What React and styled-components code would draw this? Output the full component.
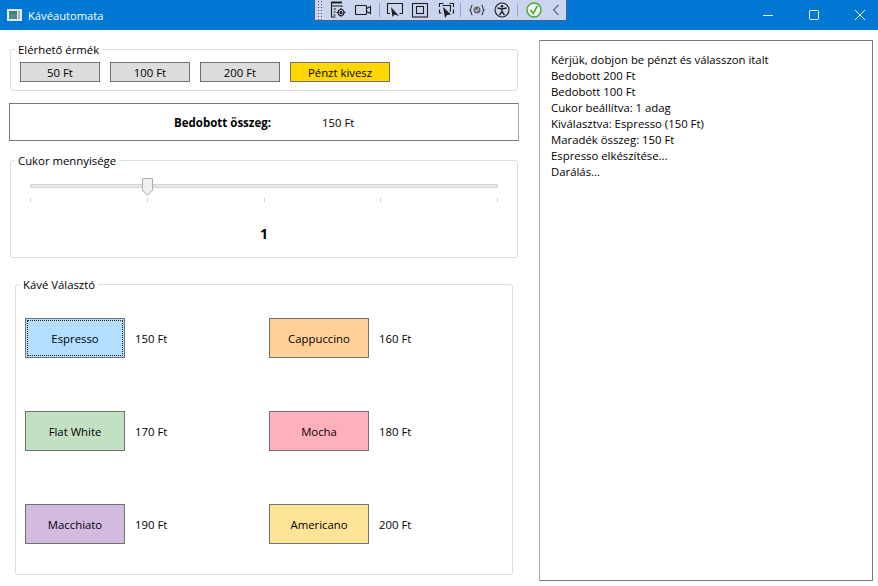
import React from "react";
import styled, { createGlobalStyle } from "styled-components";

const coins = ["50 Ft", "100 Ft", "200 Ft"];
const coffees = [
  { name: "Espresso", price: "150 Ft", color: "#b3deff", focused: true },
  { name: "Cappuccino", price: "160 Ft", color: "#ffd199" },
  { name: "Flat White", price: "170 Ft", color: "#c3e0c3" },
  { name: "Mocha", price: "180 Ft", color: "#ffb0bc" },
  { name: "Macchiato", price: "190 Ft", color: "#d3bbe0" },
  { name: "Americano", price: "200 Ft", color: "#ffe399" },
];
const logLines = [
  "Kérjük, dobjon be pénzt és válasszon italt",
  "Bedobott 200 Ft",
  "Bedobott 100 Ft",
  "Cukor beállítva: 1 adag",
  "Kiválasztva: Espresso (150 Ft)",
  "Maradék összeg: 150 Ft",
  "Espresso elkészítése...",
  "Darálás...",
];

const Icon = ({ children }) => (
  <DebugSlot>
    <svg width="22" height="20" viewBox="0 0 22 20" fill="none" stroke="#1e1e1e" strokeWidth="1.1">
      {children}
    </svg>
  </DebugSlot>
);

export default function App() {
  return (
    <>
      <GlobalStyle />
      <Window>
        <TitleBar>
          <AppIcon>
            <svg width="15" height="12" viewBox="0 0 15 12">
              <rect width="15" height="12" fill="#e4e9ec" />
              <rect x="2" y="2" width="8" height="8" fill="#4f8c8c" />
              <rect x="2" y="2" width="8" height="3" fill="#3f7f78" />
              <rect x="11" y="2" width="2" height="8" fill="#a9b4bc" />
            </svg>
          </AppIcon>
          <Title>Kávéautomata</Title>
          <WindowButtons>
            <WindowButton>
              <svg width="12" height="12" viewBox="0 0 12 12" stroke="#fff" fill="none">
                <path d="M1 6.500h10" />
              </svg>
            </WindowButton>
            <WindowButton>
              <svg width="12" height="12" viewBox="0 0 12 12" stroke="#fff" fill="none">
                <rect x="1.500" y="1.500" width="9" height="9" rx="1" />
              </svg>
            </WindowButton>
            <WindowButton>
              <svg width="12" height="12" viewBox="0 0 12 12" stroke="#fff" fill="none">
                <path d="M1 1l10 10M11 1L1 11" />
              </svg>
            </WindowButton>
          </WindowButtons>
          <DebugBar>
            <Grip />
            <Icon>
              <path d="M4 2.500h11" strokeWidth="2" />
              <path d="M4.500 3v14h4M4.500 6h10.500v1M6.500 9h2.500M6.500 12h2M6.500 15h2" />
              <circle cx="14" cy="12.500" r="3" />
              <circle cx="14" cy="12.500" r="1" fill="#1e1e1e" />
              <path d="M14 8v2M14 15v2M9.500 12.500h2M16.500 12.500h2" />
            </Icon>
            <Icon>
              <rect x="3.500" y="5.500" width="11" height="9" rx="0.500" />
              <path d="M14.500 8.500l4-2v7l-4-2z" />
            </Icon>
            <Sep />
            <Icon>
              <path d="M6 13.500H3.500v-10h15v10h-3" />
              <path d="M7 7l8 9-4.500-1.500L8.500 17z" fill="#1e1e1e" stroke="none" />
            </Icon>
            <Icon>
              <rect x="3.500" y="3.500" width="15" height="13.500" />
              <rect x="7.500" y="6.500" width="7" height="7" />
            </Icon>
            <Icon>
              <path d="M5.500 7V3.500h4M15.500 3.500h4V7M5.500 9.500V13h2M19.500 9.500V13h-1" />
              <path d="M8.500 5.500h8v5.500h-1" />
              <path d="M9 7l8 7.500-4 .5-2 3z" fill="#1e1e1e" stroke="none" />
            </Icon>
            <Sep />
            <Icon>
              <path d="M6.500 5C4.500 5 6 9.200 4 10c2 .8.5 5 2.500 5M15.500 5c2 0 .5 4.200 2.500 5-2 .8-.5 5-2.500 5" stroke="#333" />
              <circle cx="11" cy="10" r="3.500" fill="#666" stroke="none" />
              <path d="M9.300 10l1.300 1.300 2.200-2.600" stroke="#ccd5f0" />
            </Icon>
            <Icon>
              <circle cx="11" cy="10" r="7" />
              <circle cx="11" cy="6.300" r="1.300" fill="#1e1e1e" stroke="none" />
              <path d="M6.500 8l4.500 1 4.500-1M11 9v2.500l-2.500 3.500M11 11.500l2.500 3.500" strokeWidth="1.300" />
            </Icon>
            <Sep />
            <Icon>
              <circle cx="11" cy="10" r="7" fill="#f0f8ec" stroke="#45a63a" strokeWidth="1.400" />
              <path d="M7.500 10l2.800 3.500 4-7.500" stroke="#3b9c30" strokeWidth="1.500" />
            </Icon>
            <Chevron>
              <svg width="10" height="20" viewBox="0 0 10 20" fill="none">
                <path d="M7.500 5L2.500 10l5 5" stroke="#5a6690" strokeWidth="1.100" />
              </svg>
            </Chevron>
          </DebugBar>
        </TitleBar>
        <Content>
          <LeftColumn>
            <CoinGroup>
              <GroupTitle>Elérhető érmék</GroupTitle>
              <CoinRow>
                {coins.map(coin => (
                  <CoinButton key={coin}>{coin}</CoinButton>
                ))}
                <CoinButton $refund>Pénzt kivesz</CoinButton>
              </CoinRow>
            </CoinGroup>
            <AmountBox>
              <AmountLabel>Bedobott összeg:</AmountLabel>
              <span>150 Ft</span>
            </AmountBox>
            <SugarGroup>
              <GroupTitle>Cukor mennyisége</GroupTitle>
              <SugarBody>
                <Slider>
                  <Track />
                  <Thumb>
                    <svg width="12" height="19" viewBox="0 0 12 19">
                      <path d="M.5.5h10v11.500l-5 5.500-5-5.500z" fill="#f0f0f0" stroke="#acacac" />
                    </svg>
                  </Thumb>
                </Slider>
                <Ticks>
                  {[0, 1, 2, 3, 4].map(tick => (
                    <Tick key={tick} />
                  ))}
                </Ticks>
                <SugarValue>1</SugarValue>
              </SugarBody>
            </SugarGroup>
            <CoffeeGroup>
              <GroupTitle>Kávé Választó</GroupTitle>
              <CoffeeGrid>
                {coffees.map(coffee => (
                  <CoffeeItem key={coffee.name}>
                    <CoffeeButton $color={coffee.color} $focused={coffee.focused}>
                      {coffee.name}
                    </CoffeeButton>
                    <span>{coffee.price}</span>
                  </CoffeeItem>
                ))}
              </CoffeeGrid>
            </CoffeeGroup>
          </LeftColumn>
          <LogBox>
            {logLines.map(line => (
              <div key={line}>{line}</div>
            ))}
          </LogBox>
        </Content>
      </Window>
    </>
  );
}

const GlobalStyle = createGlobalStyle`
  html, body {
    margin: 0;
    padding: 0;
    background: #fff;
  }
  body {
    font-family: "Open Sans", "Noto Sans", sans-serif;
    font-size: 11.35px;
    color: #000;
  }
  * {
    box-sizing: border-box;
  }
`;

const Window = styled.div`
  width: 878px;
  height: 586px;
  overflow: hidden;
  display: flex;
  flex-direction: column;
`;

const TitleBar = styled.div`
  position: relative;
  height: 30px;
  flex: none;
  background: #0078d4;
  color: #fff;
  display: flex;
  align-items: center;
  padding-left: 7px;
`;

const AppIcon = styled.div`
  display: flex;
  margin-right: 6px;
`;

const Title = styled.div`
  font-size: 11.2px;
`;

const WindowButtons = styled.div`
  margin-left: auto;
  margin-right: -5px;
  display: flex;
`;

const WindowButton = styled.div`
  width: 46px;
  height: 30px;
  display: flex;
  align-items: center;
  justify-content: center;
`;

const DebugBar = styled.div`
  position: absolute;
  left: 314px;
  top: 0;
  width: 253px;
  height: 21px;
  background: #ccd5f0;
  border: 1px solid #4d5b95;
  border-top: 0;
  display: flex;
  align-items: center;
  padding-left: 2px;
`;

const Grip = styled.div`
  width: 6px;
  height: 20px;
  margin-right: 3px;
  background-image: radial-gradient(#555 0.6px, transparent 0.8px);
  background-size: 3px 3px;
`;

const DebugSlot = styled.div`
  width: 25px;
  display: flex;
  justify-content: center;
`;

const Chevron = styled.div`
  width: 20px;
  display: flex;
  justify-content: center;
`;

const Sep = styled.div`
  width: 1px;
  height: 14px;
  margin: 0 3px;
  background: #9aa6c4;
`;

const Content = styled.div`
  flex: 1;
  min-height: 0;
  display: flex;
  padding: 10px 5px 5px 9px;
  gap: 20px;
`;

const LeftColumn = styled.div`
  width: 510px;
  flex: none;
  display: flex;
  flex-direction: column;
`;

const Group = styled.fieldset`
  margin: 0;
  padding: 0;
  border: 1px solid #d5dfe5;
  border-radius: 3px;
  min-width: 0;
`;

const GroupTitle = styled.legend`
  padding: 1px 3px 0;
  margin-left: 4px;
  line-height: 16px;
`;

const CoinGroup = styled(Group)`
  margin: 1px 1px 0;
  height: 50px;
`;

const CoinRow = styled.div`
  display: flex;
  gap: 10px;
  padding: 4px 9px 0;
`;

const CoinButton = styled.div`
  width: ${props => (props.$refund ? "100px" : "80px")};
  height: 20px;
  background: ${props => (props.$refund ? "#ffd700" : "#dddddd")};
  border: 1px solid #707070;
  display: flex;
  align-items: center;
  justify-content: center;
`;

const AmountBox = styled.div`
  margin-top: 12px;
  height: 38px;
  flex: none;
  border: 1px solid #7a7a7a;
  border-right-color: #a8a8a8;
  display: grid;
  grid-template-columns: 148px 1fr;
  padding-left: 164px;
  align-items: center;
`;

const AmountLabel = styled.span`
  font-weight: 700;
  font-size: 11.5px;
`;

const SugarGroup = styled(Group)`
  margin: 11px 1px 0;
  height: 106px;
`;

const SugarBody = styled.div`
  padding: 9px 19px 0;
`;

const Slider = styled.div`
  position: relative;
  height: 18px;
  padding-top: 6px;
`;

const Track = styled.div`
  width: 100%;
  height: 4px;
  background: #e7e7e7;
  border: 1px solid #d6d6d6;
`;

const Thumb = styled.div`
  position: absolute;
  left: 112px;
  top: 0;
  display: flex;
`;

const Ticks = styled.div`
  display: flex;
  justify-content: space-between;
  margin-top: 2px;
`;

const Tick = styled.div`
  width: 1px;
  height: 4px;
  background: #d0d0d0;
`;

const SugarValue = styled.div`
  margin-top: 22px;
  text-align: center;
  font-weight: 700;
  font-size: 14px;
  line-height: 19px;
`;

const CoffeeGroup = styled(Group)`
  margin: 18px 6px 0;
  height: 299px;
`;

const CoffeeGrid = styled.div`
  display: grid;
  grid-template-columns: 244px 1fr;
  grid-auto-rows: 40px;
  row-gap: 53px;
  padding: 25px 9px 0;
`;

const CoffeeItem = styled.div`
  display: flex;
  align-items: center;
  gap: 10px;
`;

const CoffeeButton = styled.div`
  width: 100px;
  height: 40px;
  background: ${props => props.$color};
  border: 1px solid #707070;
  display: flex;
  align-items: center;
  justify-content: center;
  ${props => props.$focused && "outline: 1px dotted #222; outline-offset: -3px;"}
`;

const LogBox = styled.div`
  flex: 1;
  min-width: 0;
  border: 1px solid #7a7a7a;
  border-left-color: #a8a8a8;
  padding: 11px 11px;
  line-height: 16px;
`;
